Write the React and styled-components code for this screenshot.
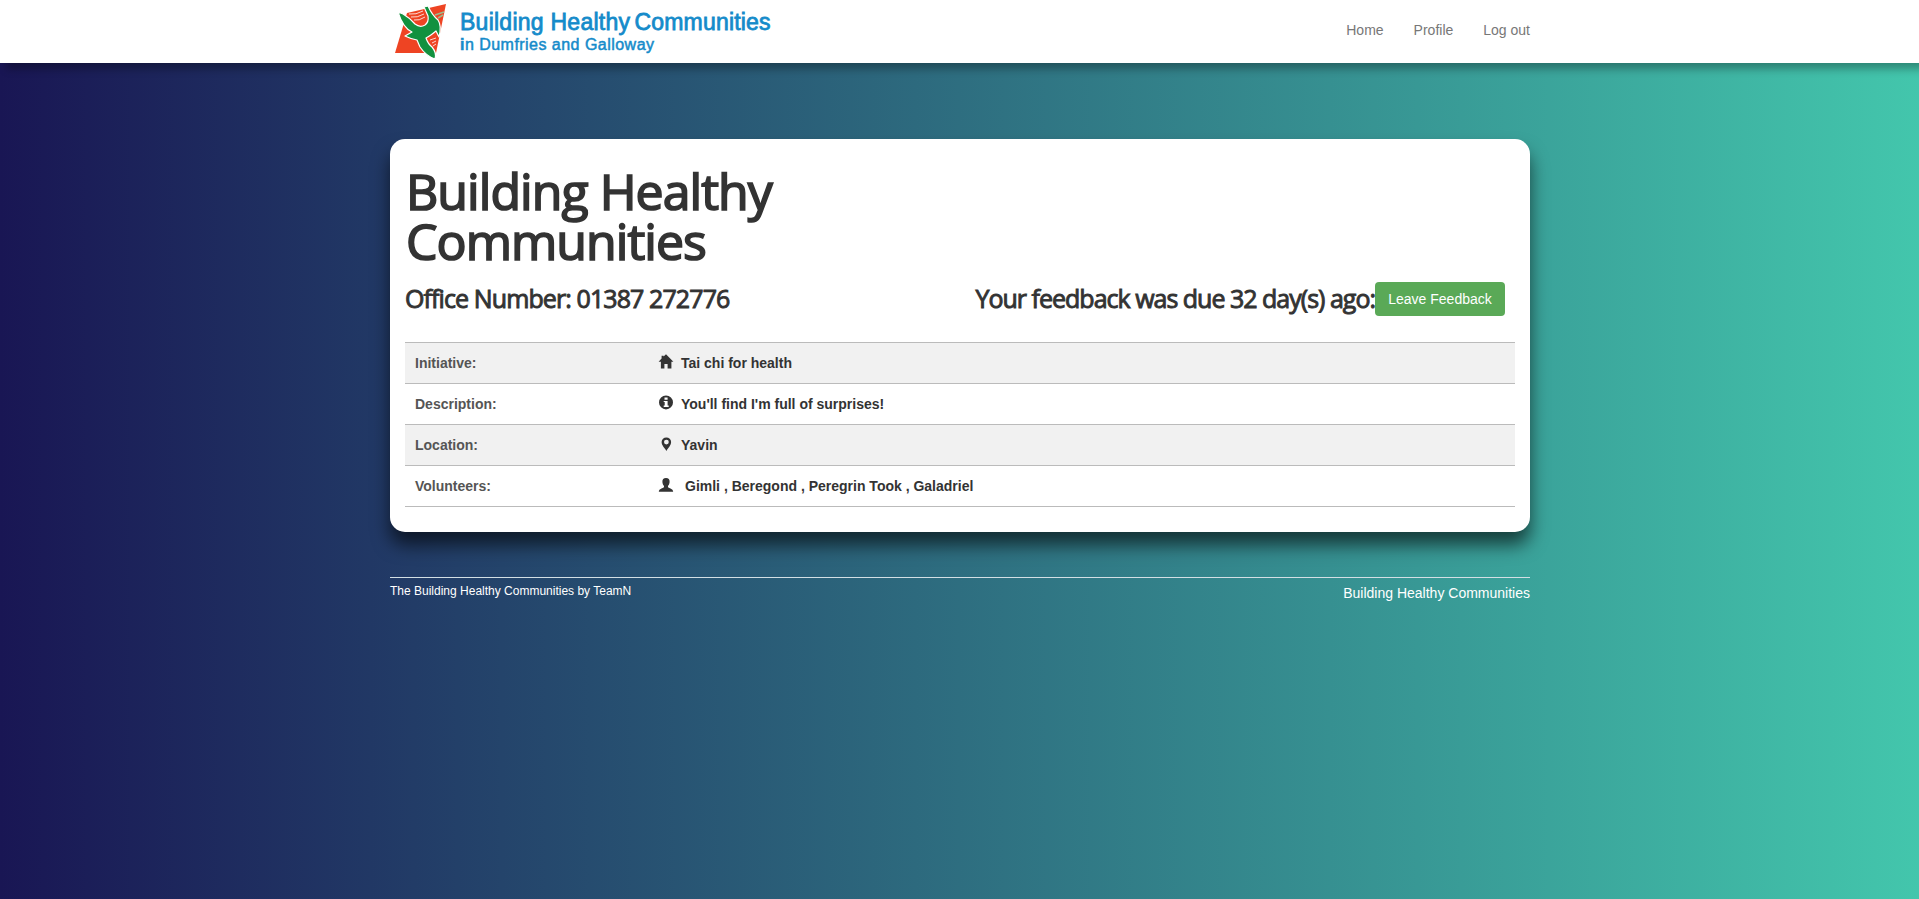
import React from "react";
import styled, { createGlobalStyle } from "styled-components";

const GlobalStyle = createGlobalStyle`
  * { box-sizing: border-box; }
  body {
    margin: 0;
    min-height: 100vh;
    font: 14px/20px "Liberation Sans", Arial, sans-serif;
    color: #333;
    background: linear-gradient(to right, #191654, #43c6ac);
  }
`;

const Navbar = styled.header`
  height: 63px;
  background: #fff;
  box-shadow: 6px 6px 8px rgba(0, 0, 0, 0.3);
`;

const Container = styled.div`
  width: 1140px;
  margin: 0 auto 0 390px;
`;

const NavInner = styled(Container)`
  display: flex;
  justify-content: space-between;
`;

const Menu = styled.nav`
  display: flex;
  gap: 30px;
  padding-top: 20px;
`;

const MenuLink = styled.a`
  color: #777;
  text-decoration: none;
`;

const Card = styled.main`
  height: 393px;
  margin-top: 76px;
  padding: 27px 15px 0;
  background: #fff;
  border-radius: 15px;
  box-shadow: 0 13px 18px rgba(0, 0, 0, 0.6);
`;

const Title = styled.h1`
  margin: 0;
  padding-left: 1px;
  width: 480px;
  font: 400 50px/50px "Open Sans", sans-serif;
  letter-spacing: -0.95px;
  -webkit-text-stroke: 1.7px #333;
`;

const InfoBar = styled.div`
  display: flex;
  justify-content: space-between;
  height: 34px;
  margin: 16px 10px 26px 0;
`;

const Subtitle = styled.h2`
  margin: 0;
  font: 400 25px/33px "Open Sans", sans-serif;
  letter-spacing: ${(p) => (p.$loose ? "-0.9px" : "-1px")};
  white-space: nowrap;
  -webkit-text-stroke: 0.9px #333;
`;

const Feedback = styled.div`
  display: flex;
`;

const Button = styled.button`
  width: 130px;
  height: 34px;
  padding: 0;
  border: 0;
  border-radius: 4px;
  background: #5aa957;
  color: #fff;
  font: 14px/20px "Liberation Sans", Arial, sans-serif;
`;

const Table = styled.div`
  border-bottom: 1px solid #bbb;
  font-weight: bold;
`;

const Row = styled.div`
  display: grid;
  grid-template-columns: 244px 1fr;
  height: 41px;
  border-top: 1px solid #bbb;
  background: ${(p) => (p.$striped ? "#f1f1f1" : "#fff")};
`;

const Label = styled.div`
  padding: 10px;
  color: #555;
`;

const Value = styled.div`
  display: flex;
  gap: ${(p) => p.$gap || 8}px;
  padding: 10px;
`;

const Glyph = styled.svg`
  width: 14px;
  height: 14px;
  margin-top: 2px;
  fill: #333;
`;

const Footer = styled(Container)`
  display: flex;
  justify-content: space-between;
  margin-top: 45px;
  padding-top: 3px;
  border-top: 1px solid #d3dfe4;
  color: #fff;
`;

const Credit = styled.span`
  font-size: 12px;
`;

const FooterLink = styled.a`
  padding-top: 2px;
`;

function Logo() {
  return (
    <svg width="390" height="63" viewBox="0 0 390 63" overflow="visible">
      <path fill="#ee4423" d="M17 13 56 4 46 53 5 53Z" />
      <path
        fill="#12913f"
        stroke="#fff"
        strokeWidth="1.2"
        strokeLinejoin="round"
        d="M8 12 13 14Q20 18 25 24 30 28 35 25 39 22 38 16L34 7 38 6Q42 15 48 20 52 26 49 37L46 31Q40 36 36 38 38 44 42 47 47 53 45 59 36 56 30 47L27 40Q21 39 15 36L22 32Q13 28 8 12Z"
      />
      <path d="M19 14Q26 15 33 11M21 17Q27 18 34 14M24 20Q29 21 35 17M40 40 46 38M42 43 46 41M43 46 46 44" stroke="#fff" strokeWidth=".8" fill="none" />
      <path d="M45 15 54 12M48 18 53 15" stroke="#9dbc8e" strokeWidth="1.5" fill="none" />
      <g fill="#158bca" stroke="#158bca" fontFamily="Liberation Sans, Arial, sans-serif">
        <text x="70" y="30" fontSize="23" strokeWidth=".8" textLength="170">Building Healthy</text>
        <text x="244.5" y="30" fontSize="23" strokeWidth=".8" textLength="136">Communities</text>
        <text x="70" y="49.5" fontSize="16" strokeWidth=".5" textLength="194"><tspan fontWeight="bold">i</tspan>n Dumfries and Galloway</text>
      </g>
    </svg>
  );
}

const icons = {
  home: "M7 -.8 14.4 6.8H12.4V13.6H8.6V9H5.4V13.6H1.9V6.8H-.4L2.6 3.6V.8H4.6V1.4Z",
  info: "M7 -.6A7 7 0 1 1 7 13.4 7 7 0 0 1 7 -.6ZM5.5 1.6V3.8H8.6V1.6ZM4.7 4.9V6.1H5.7V9.4H4.7V10.9H9.7V9.4H8.6V4.9Z",
  pin: "M7.4 .4A4.7 4.7 0 0 1 12.1 5.1C12.1 8.6 9 11 7.4 14 5.8 11 2.6 8.6 2.6 5.1A4.7 4.7 0 0 1 7.4 .4ZM7.4 2.7A2.4 2.4 0 1 0 7.4 7.5 2.4 2.4 0 1 0 7.4 2.7Z",
  user: "M7 0C9.5 0 10.8 1.5 10.6 4 10.5 6 9.7 7.2 9 8V9.3C10 10.2 14 10.8 14.2 13.7H-.2C0 10.8 4 10.2 5 9.3V8C4.3 7.2 3.5 6 3.4 4 3.2 1.5 4.5 0 7 0Z",
};

const rows = [
  ["Initiative:", "home", "Tai chi for health"],
  ["Description:", "info", "You'll find I'm full of surprises!"],
  ["Location:", "pin", "Yavin"],
  ["Volunteers:", "user", "Gimli , Beregond , Peregrin Took , Galadriel", 12],
];

export default function App() {
  return (
    <>
      <GlobalStyle />
      <Navbar>
        <NavInner>
          <Logo />
          <Menu>
            <MenuLink>Home</MenuLink>
            <MenuLink>Profile</MenuLink>
            <MenuLink>Log out</MenuLink>
          </Menu>
        </NavInner>
      </Navbar>
      <Container>
        <Card>
          <Title>Building Healthy Communities</Title>
          <InfoBar>
            <Subtitle $loose>Office Number: 01387 272776</Subtitle>
            <Feedback>
              <Subtitle>Your feedback was due 32 day(s) ago:</Subtitle>
              <Button>Leave Feedback</Button>
            </Feedback>
          </InfoBar>
          <Table>
            {rows.map(([label, icon, value, gap], i) => (
              <Row key={label} $striped={i % 2 === 0}>
                <Label>{label}</Label>
                <Value $gap={gap}>
                  <Glyph viewBox="0 0 14 14" overflow="visible">
                    <path fillRule="evenodd" d={icons[icon]} />
                  </Glyph>
                  {value}
                </Value>
              </Row>
            ))}
          </Table>
        </Card>
      </Container>
      <Footer>
        <Credit>The Building Healthy Communities by TeamN</Credit>
        <FooterLink>Building Healthy Communities</FooterLink>
      </Footer>
    </>
  );
}
